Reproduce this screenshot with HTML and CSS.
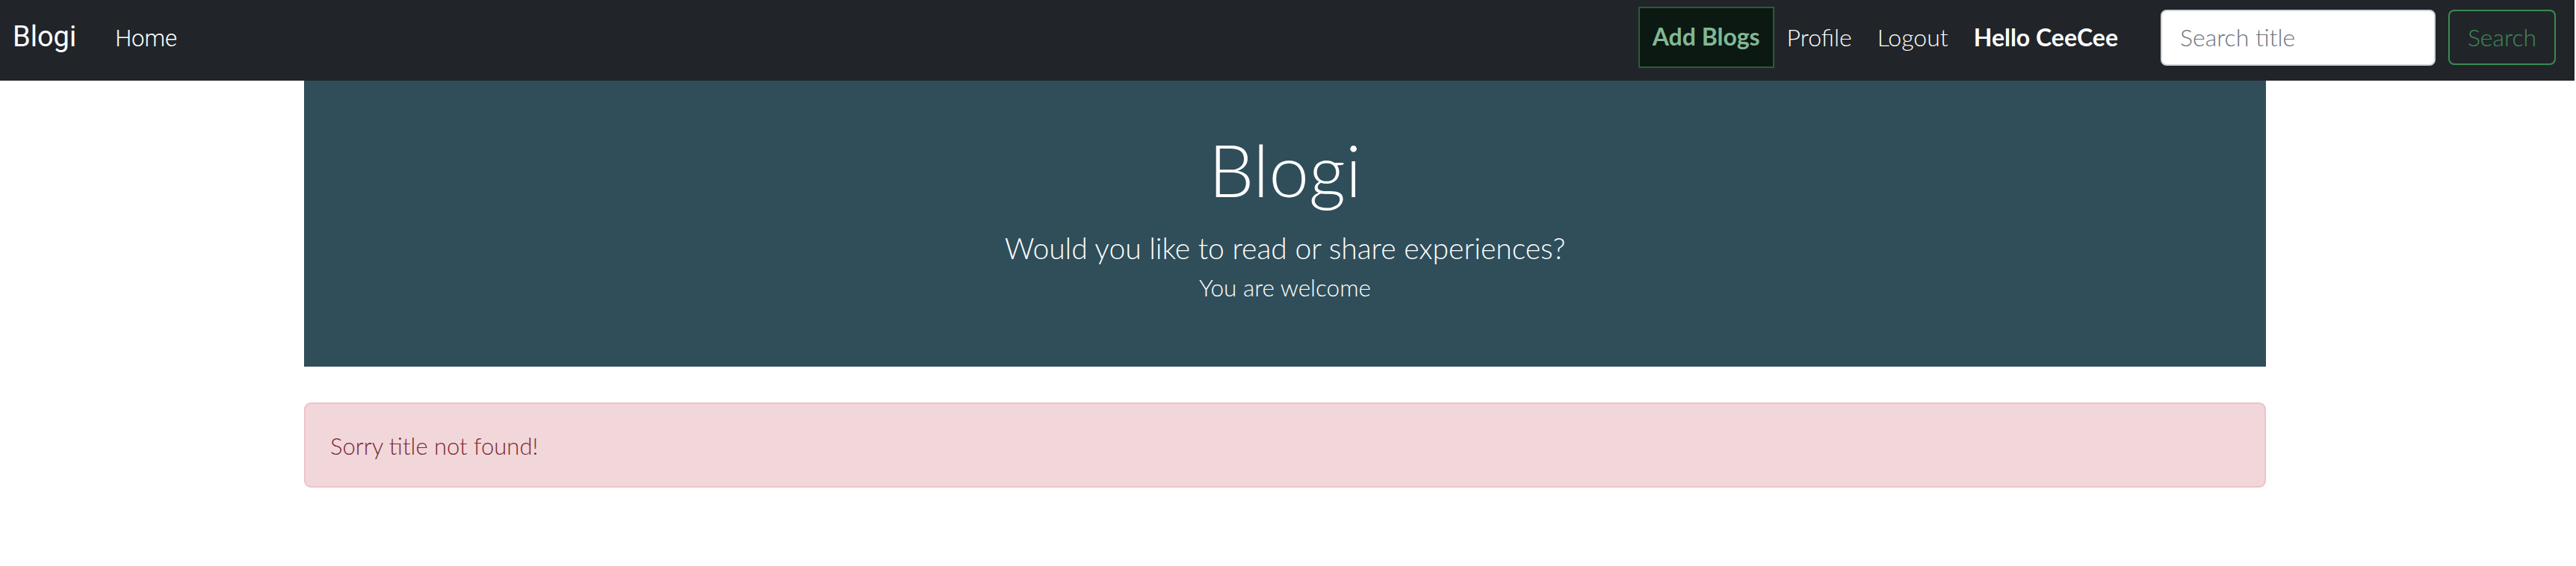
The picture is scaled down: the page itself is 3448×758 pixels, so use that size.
FILE: index.html
```html
<!DOCTYPE html>
<html lang="en">
<head>
<meta charset="utf-8">
<title>Blogi</title>
<link rel="stylesheet" href="styles.css">
</head>
<body>
<nav class="navbar">
  <a class="brand" href="#">Blogi</a>
  <a class="nav-home" href="#">Home</a>
  <div class="nav-right">
    <a class="nav-link add-blogs" href="#">Add Blogs</a>
    <a class="nav-link" href="#">Profile</a>
    <a class="nav-link" href="#">Logout</a>
    <span class="nav-link hello">Hello CeeCee</span>
    <form class="search">
      <input class="search-input" type="text" placeholder="Search title">
      <button class="search-btn" type="button">Search</button>
    </form>
  </div>
</nav>
<main class="main">
  <section class="jumbotron">
    <h1 class="jumbo-title">Blogi</h1>
    <p class="jumbo-lead">Would you like to read or share experiences?</p>
    <p class="jumbo-sub">You are welcome</p>
  </section>
  <div class="alert">Sorry title not found!</div>
</main>
</body>
</html>
```
FILE: styles.css
```css
* { box-sizing: border-box; }
html, body { margin: 0; padding: 0; background: #ffffff; }
body { font-family: "Lato", "Liberation Sans", sans-serif; font-weight: 300; }

.navbar {
  display: flex;
  align-items: center;
  height: 108px;
  padding: 0 25px 8px 17px;
  background: #212529;
  margin-right: 2px;
}
.brand {
  font-family: "Roboto", "Liberation Sans", sans-serif;
  font-weight: 400;
  font-size: 38px;
  color: #ffffff;
  text-decoration: none;
  line-height: 1.2;
}
.nav-home {
  font-family: "Roboto", "Liberation Sans", sans-serif;
  font-weight: 300;
  font-size: 31px;
  color: #ffffff;
  text-decoration: none;
  margin-left: 52px;
  line-height: 1.2;
  padding-top: 4px;
}
.nav-right {
  margin-left: auto;
  display: flex;
  align-items: center;
}
.nav-link {
  font-size: 32px;
  color: #ffffff;
  text-decoration: none;
  padding: 0 17px;
  line-height: 1.2;
}
.add-blogs {
  display: flex;
  align-items: center;
  height: 82px;
  background: #0c1812;
  border: 2px solid #2c5a39;
  color: #80b895;
  font-weight: 700;
  padding-bottom: 2px;
}
.hello { font-weight: 700; }
.search {
  display: flex;
  align-items: center;
  gap: 17px;
  margin-left: 40px;
}
.search-input {
  width: 368px;
  height: 75px;
  border: 2px solid #ced4da;
  border-radius: 8px;
  background: #ffffff;
  font-family: "Lato", sans-serif;
  font-weight: 300;
  font-size: 32px;
  padding: 0 24px 2px;
  color: #495057;
}
.search-input::placeholder { color: #6c757d; }
.search-btn {
  width: 144px;
  height: 74px;
  border: 2px solid #3a8a52;
  border-radius: 8px;
  background: transparent;
  color: #3e8b56;
  font-family: "Lato", sans-serif;
  font-weight: 300;
  font-size: 32px;
  padding: 0 0 2px;
}

.main {
  width: 2626px;
  margin: 0 0 0 407px;
}
.jumbotron {
  background: #2f4e5a;
  color: #ffffff;
  text-align: center;
  padding: 61px 20px 86px;
}
.jumbo-title {
  margin: 0;
  font-size: 96px;
  font-weight: 300;
  line-height: 1.2;
}
.jumbo-lead {
  margin: 25px 0 0;
  font-size: 39px;
  line-height: 1.2;
}
.jumbo-sub {
  margin: 11px 0 0;
  font-size: 31.5px;
  line-height: 1.2;
}
.alert {
  margin-top: 48px;
  background: #f2d7da;
  border: 2px solid #edc3c7;
  border-radius: 9px;
  color: #7a2a32;
  font-size: 31px;
  line-height: 1.2;
  padding: 38px 33px 35px;
}
```
